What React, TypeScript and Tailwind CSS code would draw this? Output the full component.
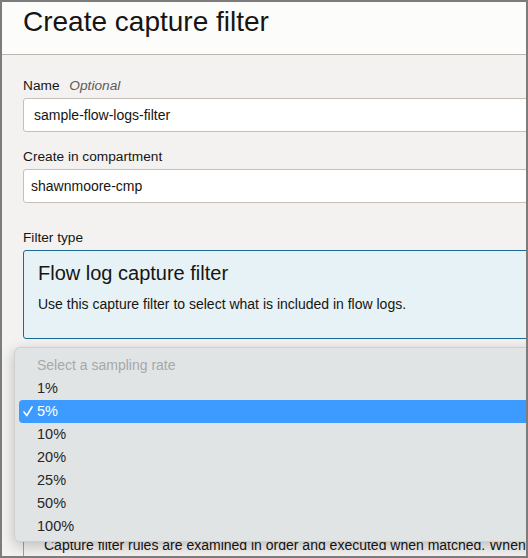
import React from 'react';

const rates = ['1%', '5%', '10%', '20%', '25%', '50%', '100%'];

const Label = ({ children }: { children: React.ReactNode }) => (
  <div className="text-[13.7px] leading-[16px] text-[#161513] mb-1">{children}</div>
);

const SamplingMenu = ({ selected }: { selected: string }) => (
  <div className="absolute left-[12px] top-[345px] w-[600px] h-[195px] rounded-[6px] bg-[#e1e4e5] border border-[#cdd0d1] shadow-[0_4px_14px_rgba(0,0,0,0.22)] pt-[6px]">
    <div className="h-[23px] leading-[23px] pl-[22px] text-[14px] text-[#a6a8a9]">Select a sampling rate</div>
    {rates.map((rate) => {
      const active = rate === selected;
      return (
        <div
          key={rate}
          className={
            active
              ? 'relative ml-[4px] h-[23px] leading-[23px] pl-[18px] rounded-l-[4px] bg-[#3d9bff] text-white text-[14.5px] font-medium'
              : 'h-[23px] leading-[23px] pl-[22px] text-[14.5px] text-[#262626]'
          }
        >
          {active && (
            <svg
              className="absolute left-[4px] top-[6px]"
              width="10"
              height="11"
              viewBox="0 0 10 11"
              fill="none"
              stroke="white"
              strokeWidth="1.6"
              strokeLinecap="round"
              strokeLinejoin="round"
            >
              <polyline points="1,6 3.8,9.6 9,1" />
            </svg>
          )}
          {rate}
        </div>
      );
    })}
  </div>
);

export default function App() {
  return (
    <div className="relative w-[528px] h-[558px] overflow-hidden border-2 border-[#7c7c7c] bg-[#f3f2f1] font-['Liberation_Sans',Arial,sans-serif]">
      <div className="w-[720px]">
        <header className="h-[53px] bg-[#fcfcfb] border-b border-[#bcb8b0] pl-[21px] pt-[3px]">
          <h1 className="text-[28px] leading-[34px] text-[#161513]">Create capture filter</h1>
        </header>

        <div className="pl-[21px] pt-[23px]">
          <Label>
            Name <span className="ml-[6px] italic text-[#5c5a57]">Optional</span>
          </Label>
          <div className="h-[34px] bg-white border border-[#c4c0b8] rounded-[3px] pl-[10px] flex items-center text-[14px] text-[#161513]">
            sample-flow-logs-filter
          </div>

          <div className="mt-[17px]">
            <Label>Create in compartment</Label>
            <div className="h-[34px] bg-white border border-[#c4c0b8] rounded-[3px] pl-[7px] flex items-center text-[14px] text-[#161513]">
              shawnmoore-cmp
            </div>
          </div>

          <div className="mt-[27px]">
            <Label>Filter type</Label>
            <div className="h-[89px] bg-[#e6f2f5] border border-[#1c6b94] rounded-[3px] pl-[14px] pt-[10px]">
              <div className="text-[20px] leading-[24px] text-[#161513]">Flow log capture filter</div>
              <div className="mt-[10px] text-[14px] leading-[18px] text-[#161513]">
                Use this capture filter to select what is included in flow logs.
              </div>
            </div>
          </div>

          <div className="mt-[20px]">
            <Label>Sampling rate</Label>
            <div className="h-[34px] bg-white border border-[#c4c0b8] rounded-[3px] pl-[10px] flex items-center text-[14px]">
              5%
            </div>
          </div>

          <div className="mt-[30px] border-l border-[#a3a19d] pl-[20px] pt-[16px]">
            <h3 className="text-[18px] leading-[28px] text-[#161513]">Rules</h3>
            <p className="mt-[48px] text-[14px] leading-[20px] text-[#161513]">
              Capture filter rules are examined in order and executed when matched. When
              <br />
              filter behavior changes.{' '}
              <a className="text-[#00688c] underline">Learn more about capture filters</a>
            </p>
          </div>
        </div>
      </div>

      <SamplingMenu selected="5%" />
    </div>
  );
}
